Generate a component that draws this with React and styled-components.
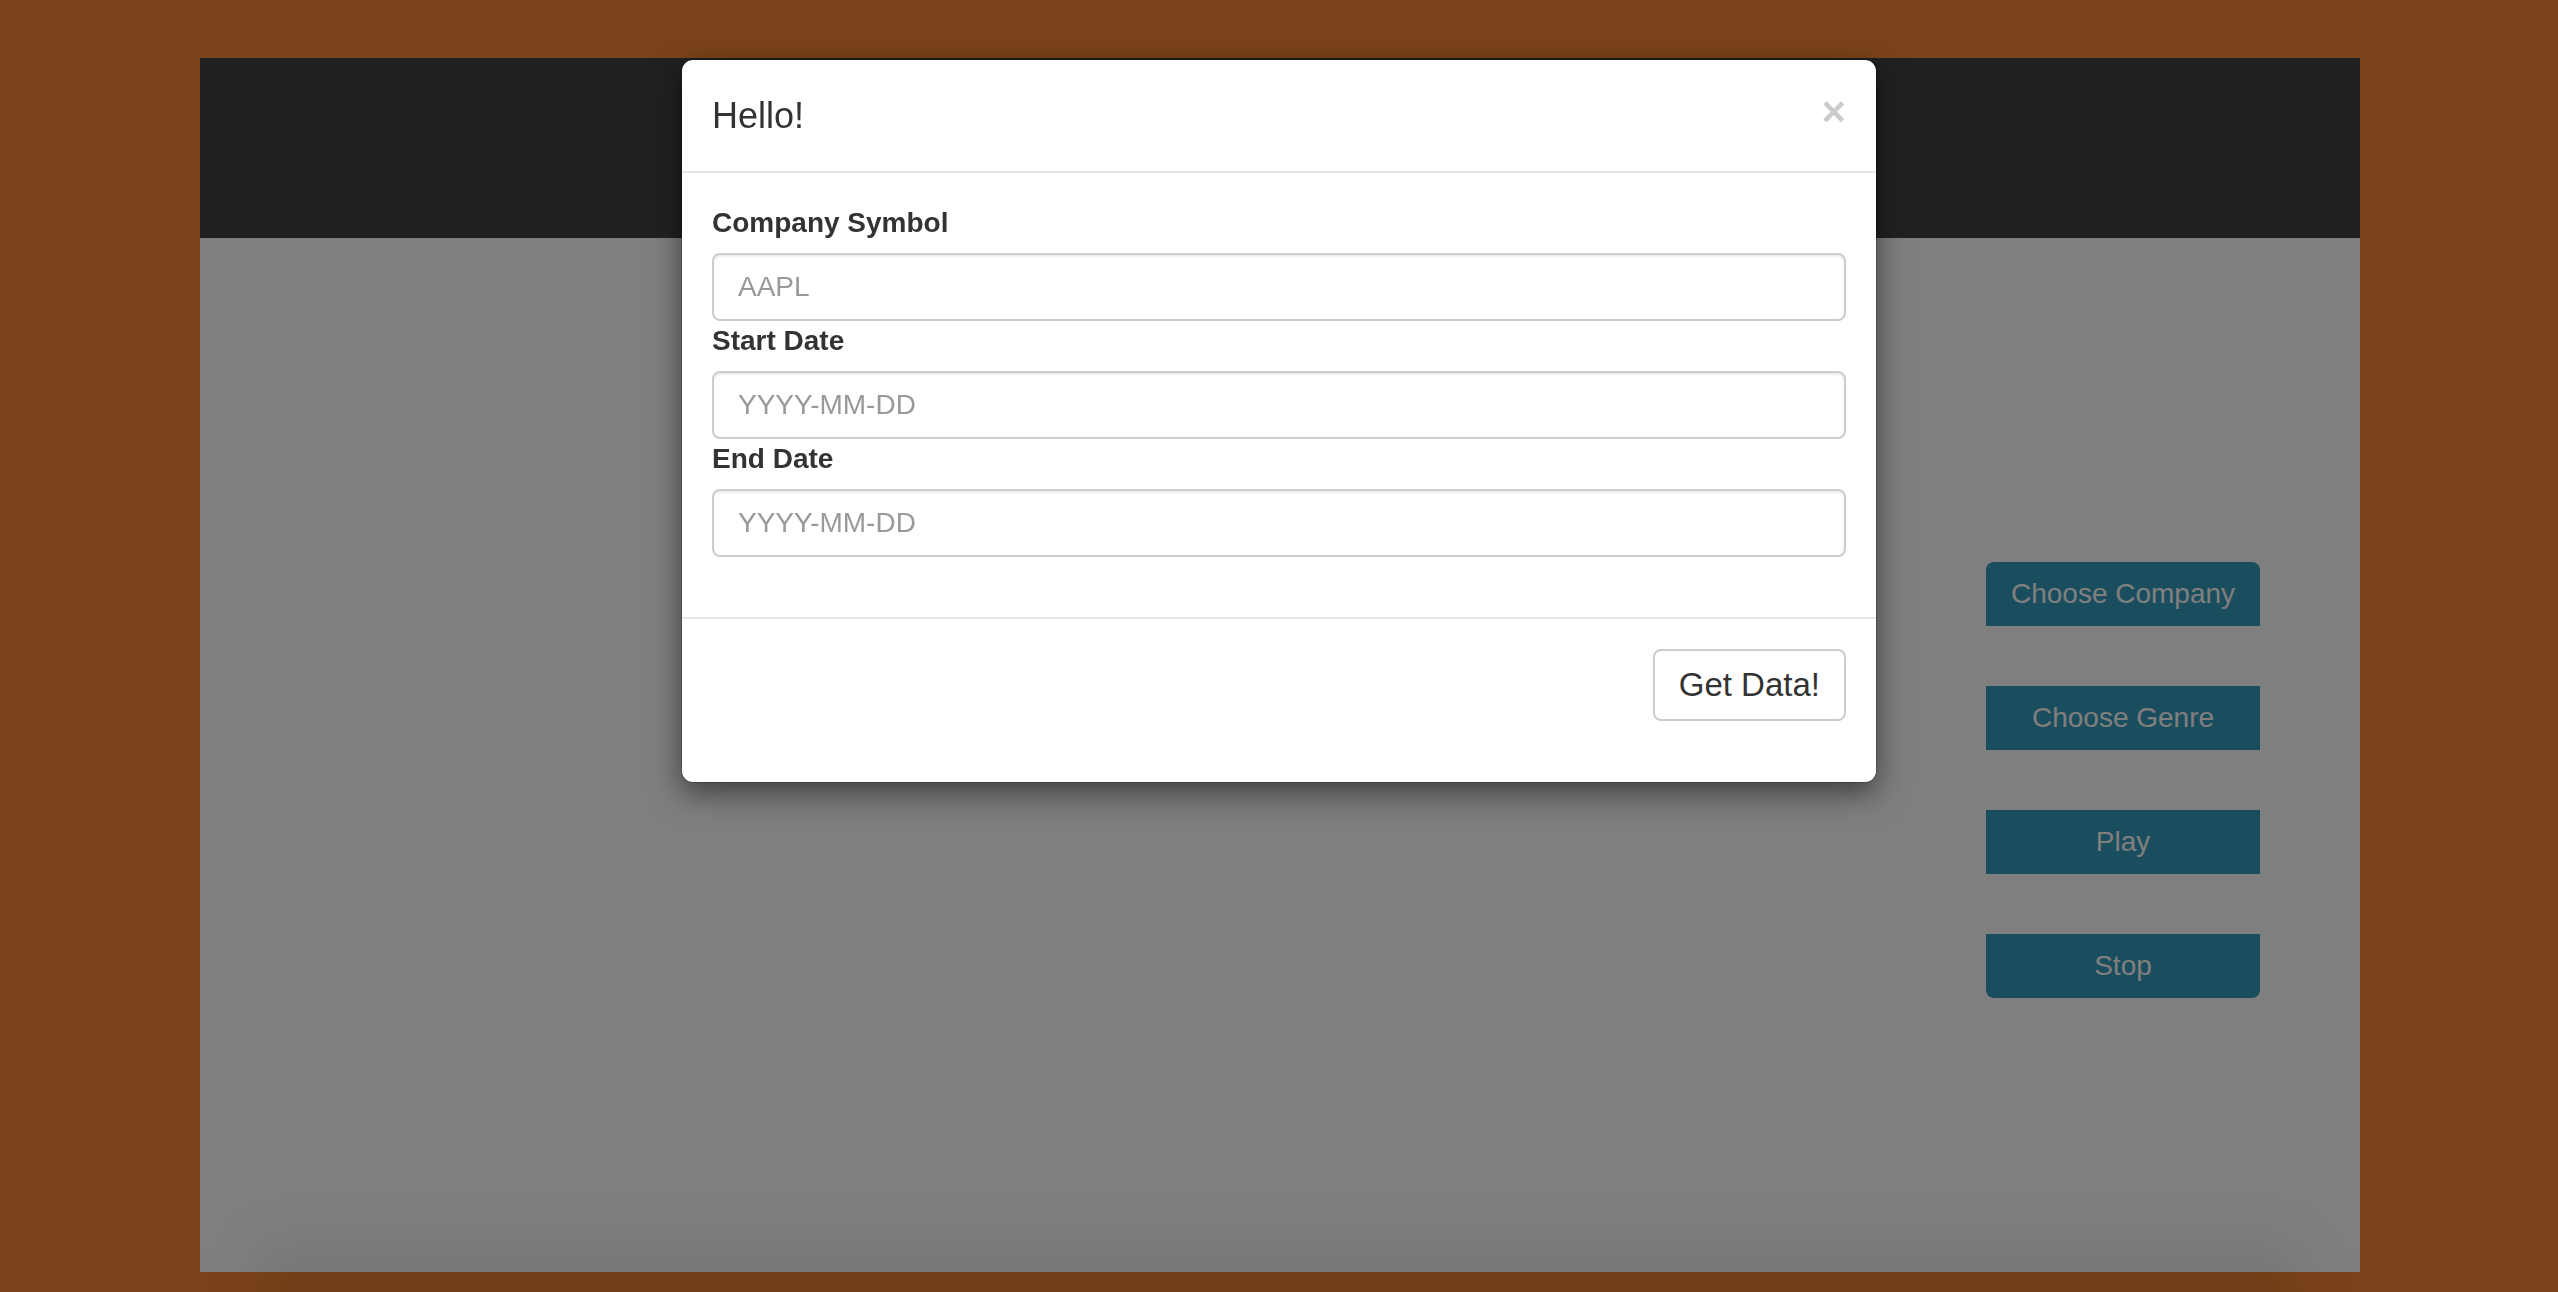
import React from "react";
import styled, { createGlobalStyle } from "styled-components";

const GlobalStyle = createGlobalStyle`
  *, *::before, *::after { box-sizing: border-box; }
  html, body { margin: 0; padding: 0; }
  body {
    background: #f68632;
    font-family: "Liberation Sans", Arial, Helvetica, sans-serif;
    color: #333;
    overflow: hidden;
  }
`;

const Page = styled.div`
  height: 100vh;
  padding-top: 58px;
  padding-left: 200px;
`;

const Container = styled.div`
  width: 2160px;
  height: 1214px;
  display: flex;
  flex-direction: column;
  background: #ffffff;
`;

const TopBar = styled.header`
  height: 180px;
  flex: none;
  background: #424242;
`;

const Stage = styled.main`
  flex: 1;
  display: flex;
  justify-content: flex-end;
  align-items: flex-start;
  padding: 324px 100px 0 0;
`;

const ControlStack = styled.div`
  width: 274px;
  display: flex;
  flex-direction: column;
  gap: 60px;
`;

const ControlButton = styled.button`
  display: block;
  width: 100%;
  border: none;
  border-radius: 0;
  padding: 12px 24px;
  background: #359abb;
  color: #ffffff;
  font-family: inherit;
  font-size: 28px;
  line-height: 40px;
  text-align: center;
  cursor: pointer;
  &:first-child {
    border-top-left-radius: 8px;
    border-top-right-radius: 8px;
  }
  &:last-child {
    border-bottom-left-radius: 8px;
    border-bottom-right-radius: 8px;
  }
`;

const Backdrop = styled.div`
  position: fixed;
  inset: 0;
  background: rgba(0, 0, 0, 0.5);
  z-index: 10;
`;

const Vignette = styled.div`
  position: fixed;
  left: 260px;
  right: 260px;
  bottom: -50px;
  height: 90px;
  background: rgba(0, 0, 0, 0.09);
  filter: blur(30px);
  pointer-events: none;
  z-index: 11;
`;

const ModalLayer = styled.div`
  position: fixed;
  inset: 0;
  z-index: 20;
  overflow: hidden;
`;

const Dialog = styled.div`
  width: 1196px;
  margin: 59px auto 0;
  background: #ffffff;
  border: 1px solid rgba(0, 0, 0, 0.2);
  border-radius: 12px;
  box-shadow: 0 10px 30px rgba(0, 0, 0, 0.5);
  background-clip: padding-box;
`;

const ModalHeader = styled.div`
  display: flex;
  justify-content: space-between;
  align-items: flex-start;
  padding: 30px;
  border-bottom: 2px solid #e5e5e5;
`;

const ModalTitle = styled.h4`
  margin: 0;
  font-size: 36px;
  font-weight: 400;
  line-height: 1.42857;
  color: #333;
`;

const CloseButton = styled.button`
  margin-top: 1px;
  padding: 0;
  border: 0;
  background: transparent;
  font-family: inherit;
  font-size: 42px;
  font-weight: 700;
  line-height: 1;
  color: #000;
  opacity: 0.2;
  cursor: pointer;
`;

const ModalBody = styled.form`
  padding: 30px 30px 60px;
`;

const FieldLabel = styled.label`
  display: block;
  margin-bottom: 10px;
  font-size: 28px;
  font-weight: 700;
  line-height: 40px;
  color: #333;
`;

const TextInput = styled.input`
  display: block;
  width: 100%;
  height: 68px;
  padding: 12px 24px;
  font-family: inherit;
  font-size: 28px;
  line-height: 40px;
  color: #555;
  background: #fff;
  border: 2px solid #ccc;
  border-radius: 8px;
  box-shadow: inset 0 2px 2px rgba(0, 0, 0, 0.075);
  outline: none;
  &::placeholder {
    color: #999;
    opacity: 1;
  }
`;

const ModalFooter = styled.div`
  display: flex;
  justify-content: flex-end;
  padding: 30px 30px 61px;
  border-top: 2px solid #e5e5e5;
`;

const SubmitButton = styled.button`
  padding: 12px 24px;
  font-family: inherit;
  font-size: 33px;
  line-height: 44px;
  color: #333;
  background: #fff;
  border: 2px solid #ccc;
  border-radius: 8px;
  cursor: pointer;
`;

const fields = [
  { id: "symbol", label: "Company Symbol", placeholder: "AAPL" },
  { id: "start", label: "Start Date", placeholder: "YYYY-MM-DD" },
  { id: "end", label: "End Date", placeholder: "YYYY-MM-DD" },
];

const controls = ["Choose Company", "Choose Genre", "Play", "Stop"];

export default function App() {
  return (
    <>
      <GlobalStyle />
      <Page>
        <Container>
          <TopBar />
          <Stage>
            <ControlStack>
              {controls.map((c) => (
                <ControlButton key={c} type="button">
                  {c}
                </ControlButton>
              ))}
            </ControlStack>
          </Stage>
        </Container>
      </Page>
      <Backdrop />
      <Vignette />
      <ModalLayer>
        <Dialog role="dialog">
          <ModalHeader>
            <ModalTitle>Hello!</ModalTitle>
            <CloseButton type="button" aria-label="Close">
              ×
            </CloseButton>
          </ModalHeader>
          <ModalBody onSubmit={(e) => e.preventDefault()}>
            {fields.map((f) => (
              <div key={f.id}>
                <FieldLabel htmlFor={f.id}>{f.label}</FieldLabel>
                <TextInput id={f.id} type="text" placeholder={f.placeholder} />
              </div>
            ))}
          </ModalBody>
          <ModalFooter>
            <SubmitButton type="button">Get Data!</SubmitButton>
          </ModalFooter>
        </Dialog>
      </ModalLayer>
    </>
  );
}
